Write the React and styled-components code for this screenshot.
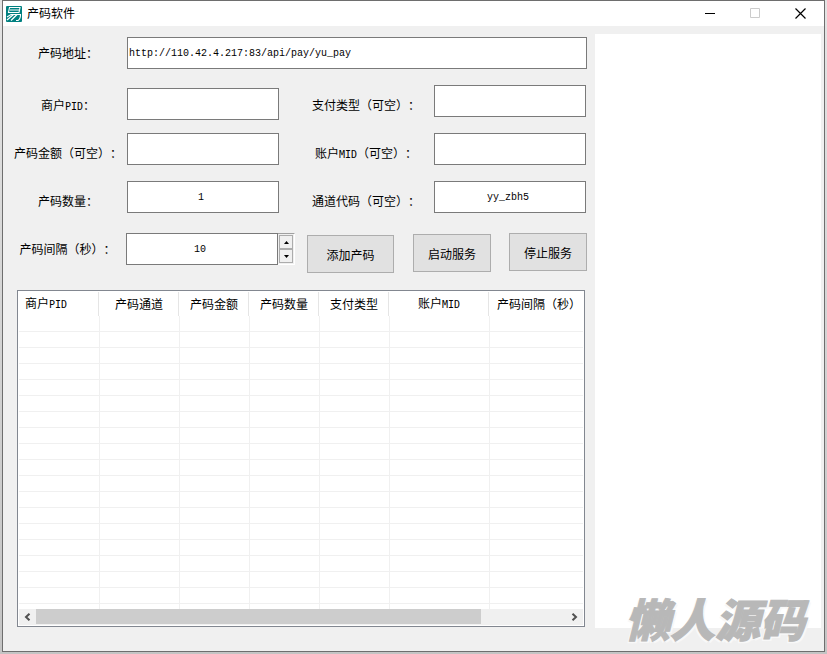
import React from "react";
import styled, { createGlobalStyle } from "styled-components";

const GlobalStyle = createGlobalStyle`
  * {
    box-sizing: border-box;
  }

  body {
    margin: 0;
    background: #cbcbcb;
    color: #000;
    font-family: "Noto Sans CJK SC", sans-serif;
    font-size: 12px;
    line-height: 16px;
    text-spacing-trim: space-all;
  }
`;

const Desktop = styled.div`
  min-height: 100vh;
  padding: 0 2px 2px;
  display: flex;
  background: linear-gradient(#e4e4e4, #c4c4c4);
`;

const Window = styled.main`
  flex: 1;
  min-width: 0;
  display: flex;
  flex-direction: column;
  position: relative;
  border: 1px solid #6e6e6e;
  background: #f0f0f0;
`;

const TitleBar = styled.header`
  height: 25px;
  padding-left: 3px;
  display: flex;
  align-items: center;
  background: #fff;
`;

const Title = styled.h1`
  margin: 0;
  padding: 0 0 2px 5px;
  flex: 1;
  font-size: 12px;
  font-weight: 400;
`;

const CaptionButton = styled.button`
  width: ${(props) => props.$width || 45}px;
  height: 25px;
  padding: 0;
  border: 0;
  display: flex;
  align-items: center;
  justify-content: center;
  background: transparent;
  color: #000;
`;

const Body = styled.div`
  flex: 1;
  display: grid;
  grid-template-columns: minmax(0, 584fr) minmax(0, 226fr);
  column-gap: 8px;
  padding: 8px 3px 23px 0;
`;

const Controls = styled.div`
  display: flex;
  flex-direction: column;
  padding: 3px 0 1px 6px;
`;

const UrlRow = styled.div`
  display: grid;
  grid-template-columns: 118px minmax(0, 1fr);
  align-items: center;
`;

const Fields = styled.div`
  display: grid;
  grid-template-columns: 118px minmax(0, 1fr) 155px minmax(0, 1fr);
  grid-auto-rows: 35px;
  row-gap: 13px;
  margin-top: 16px;
  padding-right: 1px;
`;

const Label = styled.label`
  text-align: center;
  white-space: nowrap;
`;

const FieldLabel = styled(Label)`
  padding-top: 12px;
  ${(props) => props.$second && "padding-left: 19px;"}
`;

const Latin = styled.span`
  font-family: "DejaVu Sans Mono", monospace;
  font-size: 10px;
`;

const TextBox = styled.input`
  width: 100%;
  height: 32px;
  padding: 0 4px 0 0;
  align-self: ${(props) => props.$align || "start"};
  border: 1px solid #7a7a7a;
  border-radius: 0;
  outline: 0;
  background: #fff;
  color: #000;
  font-family: "Liberation Mono", monospace;
  font-size: 10px;
  text-align: center;
`;

const UrlBox = styled(TextBox)`
  padding: 0 1px;
  text-align: left;
`;

const ActionRow = styled.div`
  height: 40px;
  margin-top: 17px;
  display: flex;
`;

const IntervalLabel = styled(Label)`
  width: 117px;
  padding-top: 8px;
`;

const Stepper = styled.div`
  flex: 1;
  height: 32px;
  margin-right: 12px;
  display: flex;
`;

const Spinner = styled.div`
  width: 17px;
  flex: none;
  padding: 1px;
  display: flex;
  flex-direction: column;
  border-top: 1px solid #a0a0a0;
  border-right: 1px solid #fff;
  border-bottom: 1px solid #fff;
`;

const SpinButton = styled.button`
  flex: 1;
  width: 14px;
  padding: 0;
  display: flex;
  align-items: center;
  justify-content: center;
  border: 1px solid #acacac;
  background: #f0f0f0;
`;

const PushButton = styled.button`
  width: ${(props) => props.$width || 78}px;
  height: 38px;
  margin-left: ${(props) => props.$gap || 0}px;
  padding: 0;
  align-self: ${(props) => props.$align};
  border: 1px solid #adadad;
  background: #e1e1e1;
  color: #000;
  font-family: inherit;
  font-size: 12px;
`;

const ListFrame = styled.section`
  flex: 1;
  min-height: 0;
  margin: 17px 2px 0 8px;
  padding: 1px;
  display: flex;
  flex-direction: column;
  border: 1px solid #828790;
  background: #fff;
`;

const ListView = styled.div`
  flex: 1 1 0;
  min-height: 0;
  overflow: hidden;
`;

const Grid = styled.table`
  width: 571px;
  min-width: 100%;
  table-layout: fixed;
  border-spacing: 0;
`;

const HeadCell = styled.th`
  width: ${(props) => props.$width}px;
  height: 24px;
  padding: ${(props) => (props.$left ? "0 6px" : "0 2px 0 0")};
  background: linear-gradient(#e5e5e5, #e5e5e5) right 1px top / 1px 100% no-repeat;
  font-weight: 400;
  text-align: ${(props) => (props.$left ? "left" : "center")};
  white-space: nowrap;
`;

const Cell = styled.td`
  height: 16px;
  padding: 0;
  border-right: 1px solid #f0f0f0;
  border-bottom: 1px solid #f0f0f0;
`;

const ScrollBar = styled.div`
  height: 16px;
  flex: none;
  display: flex;
  background: #f0f0f0;
`;

const ScrollButton = styled.button`
  width: 17px;
  padding: 0;
  display: flex;
  align-items: center;
  justify-content: center;
  border: 0;
  background: transparent;
`;

const Track = styled.div`
  flex: 1;
`;

const Thumb = styled.div`
  width: 84%;
  height: 15px;
  background: #cdcdcd;
`;

const LogBox = styled.textarea`
  width: 100%;
  height: 100%;
  padding: 4px;
  border: 0;
  outline: 0;
  resize: none;
  background: #fff;
  font-family: inherit;
  font-size: 12px;
`;

const Watermark = styled.div`
  position: absolute;
  right: 19px;
  bottom: 8px;
  color: #b8b8b8;
  font-size: 45px;
  font-style: italic;
  font-weight: 900;
  line-height: 50px;
  -webkit-text-stroke: 1px #b8b8b8;
  text-shadow: 1px 1px 0 #f8f8f8, -1px 1px 0 #f8f8f8, 2px 2px 0 #f8f8f8, -2px 2px 0 #f8f8f8;
  pointer-events: none;
`;

const AppIcon = () => (
  <svg width="16" height="16" viewBox="0 0 16 16" aria-hidden="true">
    <rect width="16" height="16" rx="1" fill="#008080" />
    <g fill="none" stroke="#fff" strokeWidth="1.1">
      <path d="M3.500 1.500h10.500l-1 5h-10.500zM4 4h9" />
      <path d="M1 11l4-2.500h9.500c0 3-.8 5-2.500 6h-2" />
      <path d="M1 14l6.500-5.500M5 14.500l6-6" strokeWidth="1.300" />
    </g>
  </svg>
);

const Arrow = ({ d }) => (
  <svg width="5" height="3" viewBox="0 0 5 3" aria-hidden="true">
    <path d={d} fill="#000" />
  </svg>
);

const Chevron = ({ d }) => (
  <svg width="7" height="8" viewBox="0 0 7 8" aria-hidden="true">
    <path d={d} fill="none" stroke="#505050" strokeWidth="2" />
  </svg>
);

const fields = [
  { id: "pid", label: <>商户<Latin>PID</Latin>：</>, value: "", align: "end" },
  { id: "type", label: "支付类型（可空）：", value: "" },
  { id: "amount", label: "产码金额（可空）：", value: "" },
  { id: "mid", label: <>账户<Latin>MID</Latin>（可空）：</>, value: "" },
  { id: "count", label: "产码数量：", value: "1" },
  { id: "channel", label: "通道代码（可空）：", value: "yy_zbh5" },
];

const columns = [
  { id: "pid", title: <>商户<Latin>PID</Latin></>, width: 81 },
  { id: "channel", title: "产码通道", width: 80 },
  { id: "amount", title: "产码金额", width: 70 },
  { id: "count", title: "产码数量", width: 70 },
  { id: "type", title: "支付类型", width: 70 },
  { id: "mid", title: <>账户<Latin>MID</Latin></>, width: 100 },
  { id: "interval", title: "产码间隔（秒）", width: 100 },
];

const rows = Array.from({ length: 40 }, (_, i) => i);

const App = () => {
  const [seconds, setSeconds] = React.useState(10);

  return (
    <>
      <GlobalStyle />
      <Desktop>
        <Window>
          <TitleBar>
            <AppIcon />
            <Title>产码软件</Title>
            <CaptionButton aria-label="最小化">
              <svg width="11" height="11" viewBox="0 0 11 11">
                <path d="M1 5.500h10" stroke="#000" />
              </svg>
            </CaptionButton>
            <CaptionButton aria-label="最大化" disabled>
              <svg width="11" height="11" viewBox="0 0 11 11">
                <path d="M1.500 .5h9v9h-9z" fill="none" stroke="#ccc" />
              </svg>
            </CaptionButton>
            <CaptionButton aria-label="关闭" $width={47}>
              <svg width="11" height="11" viewBox="0 0 11 11">
                <path d="M.5 .5l10 10M10.500 .5l-10 10" stroke="#000" strokeWidth="1.200" />
              </svg>
            </CaptionButton>
          </TitleBar>

          <Body>
            <Controls>
              <UrlRow>
                <Label htmlFor="url">产码地址：</Label>
                <UrlBox id="url" defaultValue="http://110.42.4.217:83/api/pay/yu_pay" />
              </UrlRow>

              <Fields>
                {fields.map((field, i) => (
                  <React.Fragment key={field.id}>
                    <FieldLabel htmlFor={field.id} $second={i % 2 === 1}>
                      {field.label}
                    </FieldLabel>
                    <TextBox id={field.id} defaultValue={field.value} $align={field.align} />
                  </React.Fragment>
                ))}
              </Fields>

              <ActionRow>
                <IntervalLabel htmlFor="interval">产码间隔（秒）：</IntervalLabel>
                <Stepper>
                  <TextBox
                    id="interval"
                    value={seconds}
                    onChange={(e) => setSeconds(Number(e.target.value) || 0)}
                  />
                  <Spinner>
                    <SpinButton aria-label="增加" onClick={() => setSeconds(seconds + 1)}>
                      <Arrow d="M0 3L2.500 0L5 3z" />
                    </SpinButton>
                    <SpinButton aria-label="减少" onClick={() => setSeconds(Math.max(0, seconds - 1))}>
                      <Arrow d="M0 0h5L2.500 3z" />
                    </SpinButton>
                  </Spinner>
                </Stepper>
                <PushButton $width={87} $align="end">添加产码</PushButton>
                <PushButton $gap={19} $align="center">启动服务</PushButton>
                <PushButton $gap={18} $align="start">停止服务</PushButton>
              </ActionRow>

              <ListFrame>
                <ListView>
                  <Grid>
                    <thead>
                      <tr>
                        {columns.map((col, i) => (
                          <HeadCell key={col.id} $width={col.width} $left={i === 0}>
                            {col.title}
                          </HeadCell>
                        ))}
                      </tr>
                    </thead>
                    <tbody>
                      {rows.map((row) => (
                        <tr key={row}>
                          {columns.map((col) => (
                            <Cell key={col.id} />
                          ))}
                        </tr>
                      ))}
                    </tbody>
                  </Grid>
                </ListView>
                <ScrollBar>
                  <ScrollButton aria-label="向左滚动">
                    <Chevron d="M5.500 .7L2 4l3.500 3.300" />
                  </ScrollButton>
                  <Track>
                    <Thumb />
                  </Track>
                  <ScrollButton aria-label="向右滚动">
                    <Chevron d="M1.500 .7L5 4L1.500 7.300" />
                  </ScrollButton>
                </ScrollBar>
              </ListFrame>
            </Controls>

            <LogBox aria-label="日志" readOnly />
          </Body>

          <Watermark>懒人源码</Watermark>
        </Window>
      </Desktop>
    </>
  );
};

export default App;
